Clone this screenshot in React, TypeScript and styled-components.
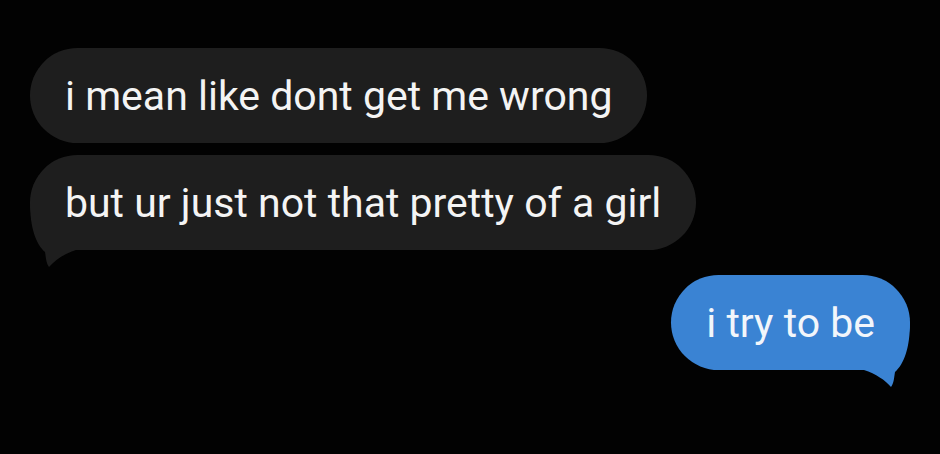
import React from "react";
import styled, { createGlobalStyle } from "styled-components";

const GlobalStyle = createGlobalStyle`
  html, body {
    margin: 0;
    padding: 0;
    background: #000;
  }
  body {
    font-family: Roboto, "Liberation Sans", sans-serif;
  }
`;

const Thread = styled.div`
  width: 940px;
  height: 454px;
  box-sizing: border-box;
  padding: 48px 30px 0 30px;
  display: flex;
  flex-direction: column;
  background: #020202;
  overflow: hidden;
`;

const Row = styled.div<{ $mine?: boolean; $gap: number }>`
  display: flex;
  justify-content: ${(p) => (p.$mine ? "flex-end" : "flex-start")};
  margin-top: ${(p) => p.$gap}px;
`;

const Bubble = styled.div<{ $mine?: boolean }>`
  position: relative;
  height: 95px;
  box-sizing: border-box;
  padding: 0 35px;
  display: flex;
  align-items: center;
  border-radius: 48px;
  background: ${(p) => (p.$mine ? "#3a83d3" : "#1e1e1e")};
  color: ${(p) => (p.$mine ? "#f2f6fb" : "#f4f4f4")};
  font-size: 41px;
  white-space: nowrap;
`;

const Label = styled.span`
  position: relative;
`;

const Tail = styled.svg<{ $mine?: boolean }>`
  position: absolute;
  bottom: -18px;
  width: 46px;
  height: 68px;
  ${(p) => (p.$mine ? "right: 0;" : "left: 0; transform: scaleX(-1);")}
`;

// drawn for the right side, mirrored for incoming messages;
// the bubble's bottom edge sits at y = 50
function BubbleTail({ mine }: { mine?: boolean }) {
  return (
    <Tail $mine={mine} viewBox="0 0 46 68">
      <path
        d="M46 2 C46 28 40 44 31 52 C30 58 30 63 27 67 C21 60 12 54 0 50 L0 2 Z"
        fill={mine ? "#3a83d3" : "#1e1e1e"}
      />
    </Tail>
  );
}

type Message = { text: string; mine?: boolean; tail?: boolean; gap: number };

const messages: Message[] = [
  { text: "i mean like dont get me wrong", gap: 0 },
  { text: "but ur just not that pretty of a girl", tail: true, gap: 12 },
  { text: "i try to be", mine: true, tail: true, gap: 25 },
];

export default function App() {
  return (
    <>
      <GlobalStyle />
      <Thread>
        {messages.map((m) => (
          <Row key={m.text} $mine={m.mine} $gap={m.gap}>
            <Bubble $mine={m.mine}>
              {m.tail && <BubbleTail mine={m.mine} />}
              <Label>{m.text}</Label>
            </Bubble>
          </Row>
        ))}
      </Thread>
    </>
  );
}
